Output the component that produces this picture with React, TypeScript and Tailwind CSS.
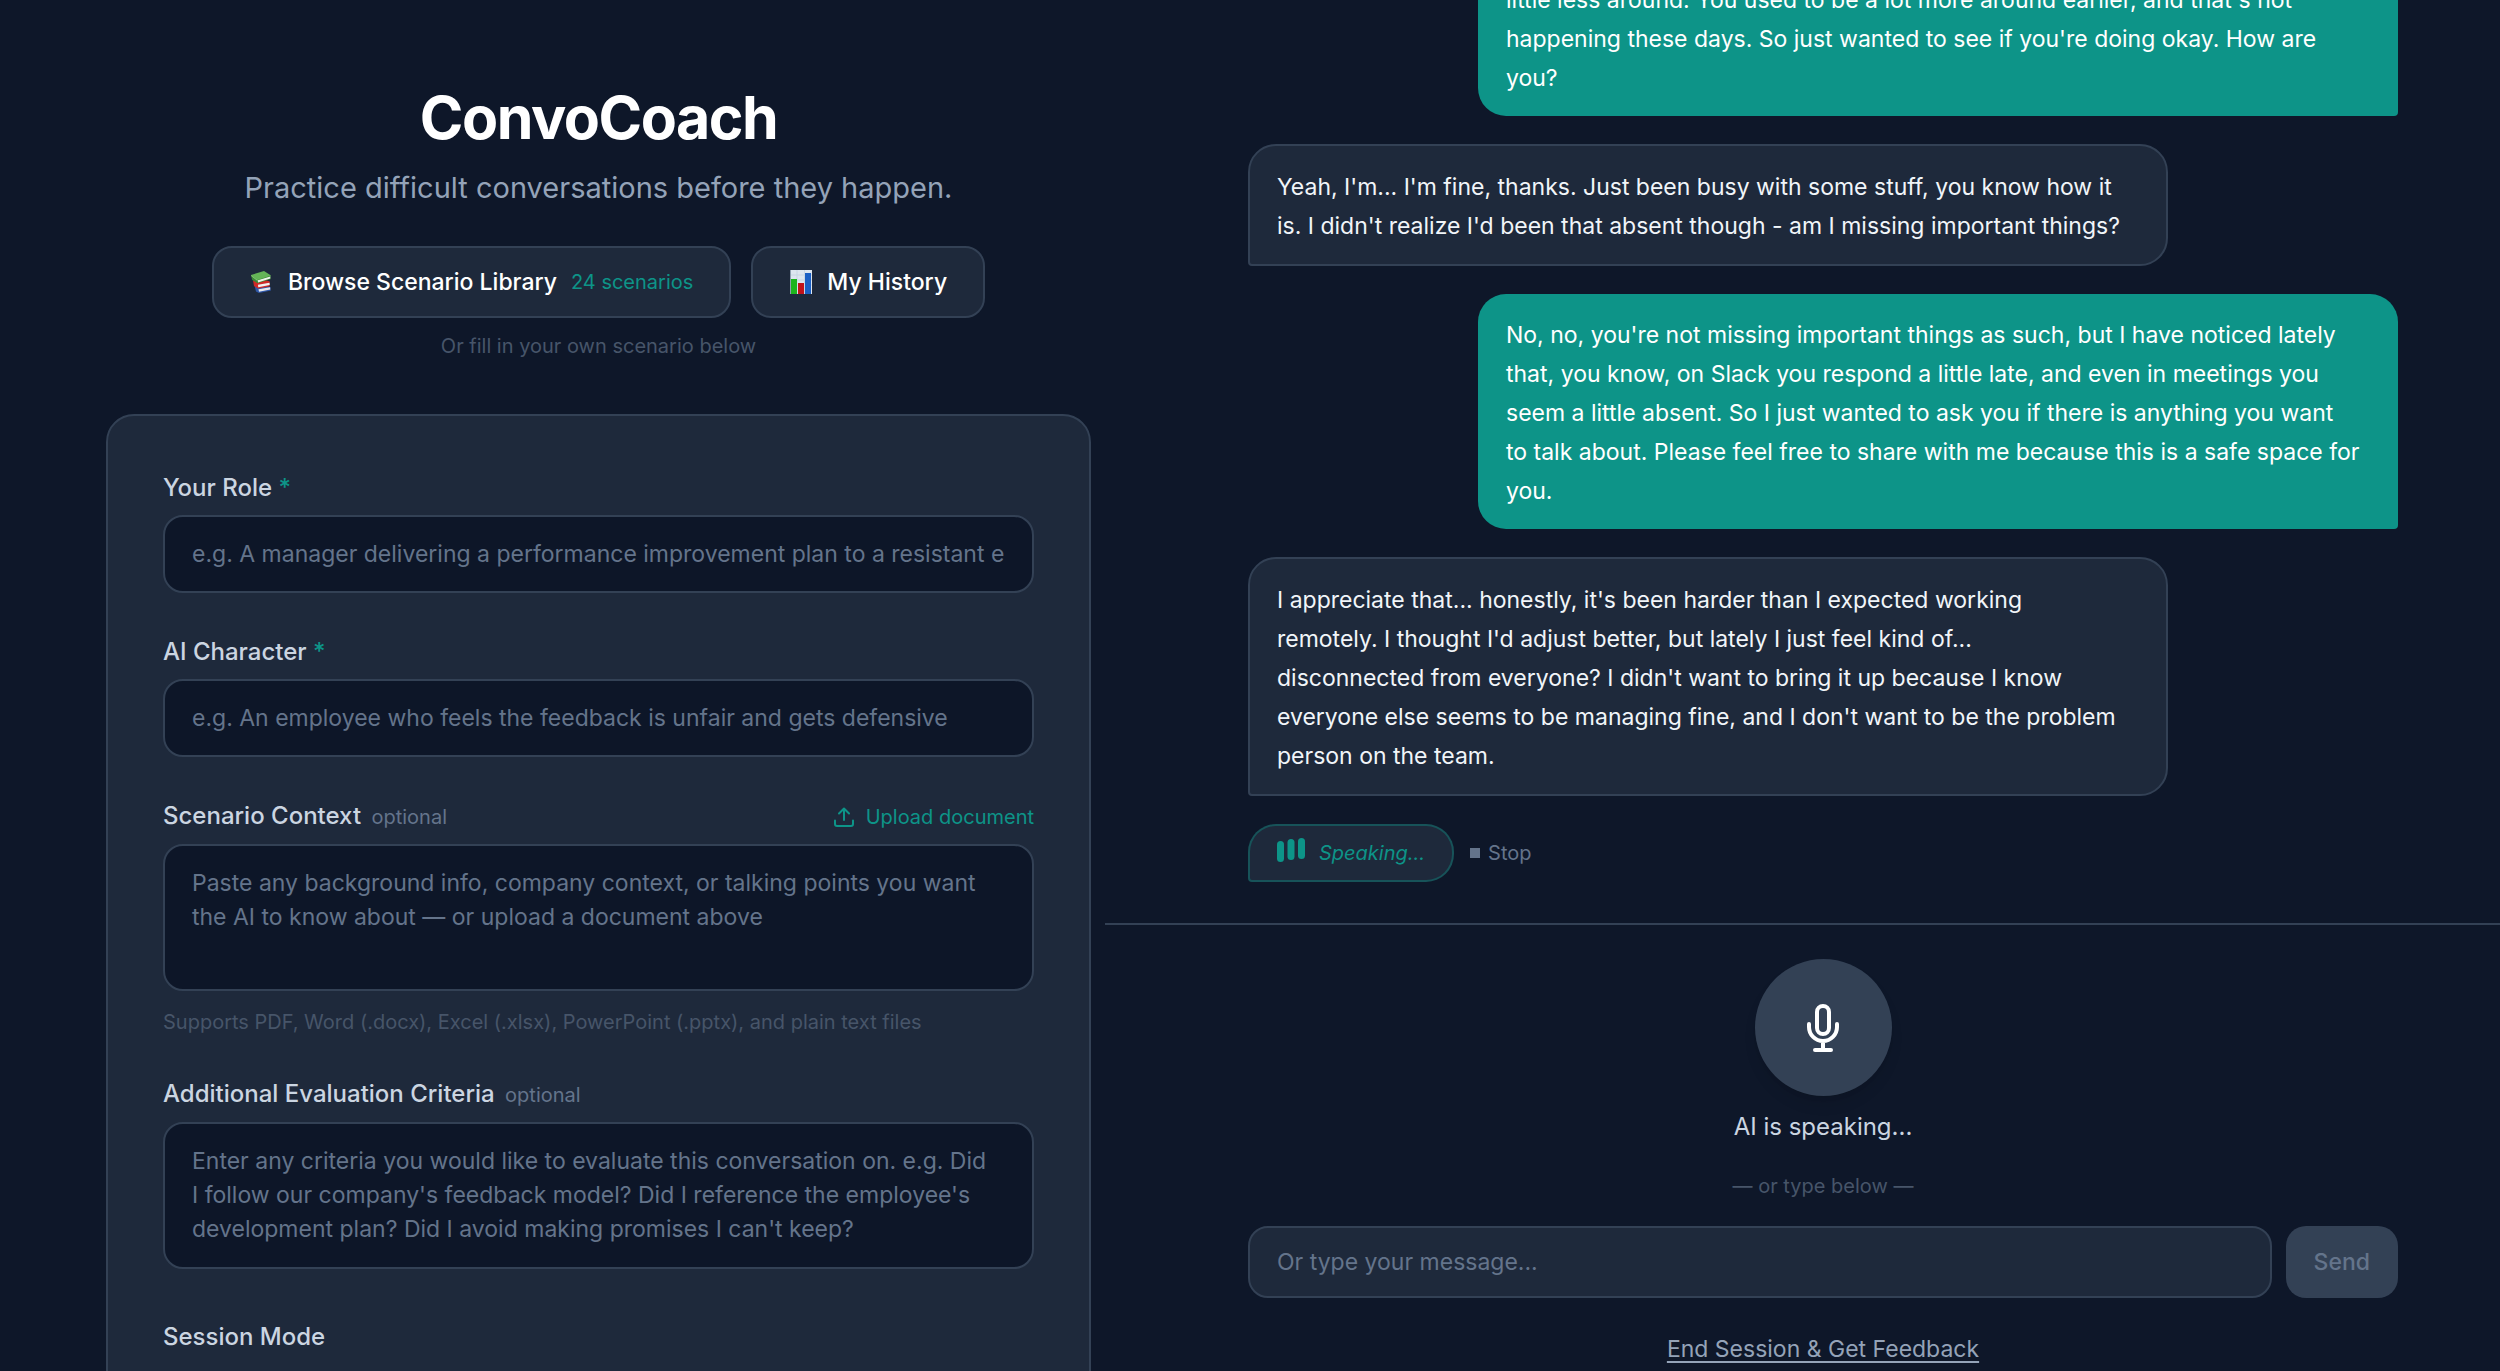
import React from 'react';

interface Message {
  from: 'me' | 'ai';
  text: string;
}

const messages: Message[] = [
  {
    from: 'me',
    text: "little less around. You used to be a lot more around earlier, and that's not\nhappening these days. So just wanted to see if you're doing okay. How are\nyou?",
  },
  {
    from: 'ai',
    text: "Yeah, I'm... I'm fine, thanks. Just been busy with some stuff, you know how it\nis. I didn't realize I'd been that absent though - am I missing important things?",
  },
  {
    from: 'me',
    text: "No, no, you're not missing important things as such, but I have noticed lately\nthat, you know, on Slack you respond a little late, and even in meetings you\nseem a little absent. So I just wanted to ask you if there is anything you want\nto talk about. Please feel free to share with me because this is a safe space for\nyou.",
  },
  {
    from: 'ai',
    text: "I appreciate that... honestly, it's been harder than I expected working\nremotely. I thought I'd adjust better, but lately I just feel kind of...\ndisconnected from everyone? I didn't want to bring it up because I know\neveryone else seems to be managing fine, and I don't want to be the problem\nperson on the team.",
  },
];

const BooksIcon = () => (
  <svg className="w-6 h-6" viewBox="0 0 24 24" aria-hidden="true">
    <path d="M4.500 15.500L6 21.500l3 1.500 12-2.500-.6-1 .2-2.500z" fill="#2f57a8" />
    <path d="M8.500 19.200l11.500-2 .3 2.300L9 21.800z" fill="#e8eaee" />
    <path d="M3 10.500l1 5.500 4 2.500 12-2.300-.5-1 .3-3.700L12 9z" fill="#cf2a27" />
    <path d="M8 14.800l11.500-2 .2 2.200L8.300 17.300z" fill="#f2f2f2" />
    <path d="M1 5l1.200 5L7.500 13.300 21 9l-.8-1.200.6-2.300z" fill="#3c8a35" />
    <path d="M7.800 10.300l12.600-3.900-.2 2L8 12.400z" fill="#eef4ea" />
    <path d="M1 5L14 1l7 4.500L7.500 10z" fill="#65b457" />
    <path d="M1 5l6.500 5v1L1.200 6z" fill="#8fd07f" />
  </svg>
);

const ChartIcon = () => (
  <svg className="w-6 h-6" viewBox="0 0 24 24" aria-hidden="true">
    <rect x="1" y="0" width="22" height="24" fill="#dde6ef" />
    <path d="M1 5h22M1 10h22M1 15h22M8 0v24M15.500 0v24" stroke="#c9d6e3" strokeWidth="1" />
    <path d="M1.500 0v24" stroke="#8fa0b0" strokeWidth="1" />
    <rect x="2" y="9" width="6" height="15" fill="#1db41d" />
    <rect x="9" y="13" width="6" height="11" fill="#c1121a" />
    <rect x="16" y="3" width="6" height="21" fill="#1a5fc4" />
  </svg>
);

const UploadIcon = () => (
  <svg className="w-5 h-5" viewBox="0 0 20 20" fill="none" stroke="currentColor" strokeWidth="2" strokeLinecap="round" strokeLinejoin="round" aria-hidden="true">
    <path d="M1 13.500V17a2 2 0 0 0 2 2h14a2 2 0 0 0 2-2v-3.500M10 13V1.500M5 6.500l5-5 5 5" />
  </svg>
);

const MicIcon = () => (
  <svg className="w-14 h-14" viewBox="0 0 56 56" fill="none" stroke="currentColor" strokeWidth="4" strokeLinecap="round" strokeLinejoin="round" aria-hidden="true">
    <rect x="22" y="6" width="12" height="28" rx="6" />
    <path d="M14 24v3a14 14 0 0 0 28 0v-3M28 41v9M20 50h16" />
  </svg>
);

const labelStyle = 'block text-[24px] leading-8 font-medium text-[#cbd5e1]';
const fieldStyle =
  'block w-full rounded-[20px] border-2 border-[#334155] bg-[#0d1628] px-[27px] text-[23px] text-white placeholder:text-[#64748b] outline-none resize-none';
const navButtonStyle =
  'flex h-[72px] items-center gap-[14px] rounded-[20px] border-2 border-[#334155] bg-[#1e293b] px-9 text-[23px] font-medium text-white';

const SetupPanel: React.FC = () => (
  <section className="w-[1105px] shrink-0 pl-[106px] pr-[14px] pt-[84px]">
    <header className="flex flex-col items-center">
      <h1 className="text-[59px] leading-[68px] font-bold tracking-tight text-white">ConvoCoach</h1>
      <p className="mt-4 text-[29px] leading-10 text-[#94a3b8]">Practice difficult conversations before they happen.</p>
      <div className="mt-[38px] flex gap-5">
        <button className={navButtonStyle}>
          <BooksIcon />
          Browse Scenario Library
          <span className="text-[20px] font-normal text-[#0d9488]">24 scenarios</span>
        </button>
        <button className={navButtonStyle}>
          <ChartIcon />
          My History
        </button>
      </div>
      <p className="mt-3 text-[20px] leading-8 text-[#475569]">Or fill in your own scenario below</p>
    </header>

    <form className="mt-[52px] rounded-t-[28px] border-2 border-[#334155] bg-[#1e293b] px-[55px] pt-14 pb-14">
      <div>
        <label htmlFor="role" className={labelStyle}>
          Your Role <span className="text-[#0d9488]">*</span>
        </label>
        <input id="role" className={`${fieldStyle} mt-[11px] h-[78px]`} placeholder="e.g. A manager delivering a performance improvement plan to a resistant employee" />
      </div>

      <div className="mt-[43px]">
        <label htmlFor="character" className={labelStyle}>
          AI Character <span className="text-[#0d9488]">*</span>
        </label>
        <input id="character" className={`${fieldStyle} mt-[11px] h-[78px]`} placeholder="e.g. An employee who feels the feedback is unfair and gets defensive" />
      </div>

      <div className="mt-[43px]">
        <div className="flex items-center justify-between">
          <label htmlFor="context" className={labelStyle}>
            Scenario Context <span className="ml-1 text-[20px] font-normal text-[#64748b]">optional</span>
          </label>
          <button type="button" className="flex items-center gap-3 text-[20px] leading-8 text-[#0d9488]">
            <UploadIcon />
            Upload document
          </button>
        </div>
        <textarea id="context" rows={3} className={`${fieldStyle} mt-[11px] h-[147px] py-5 leading-[34px]`} placeholder="Paste any background info, company context, or talking points you want the AI to know about — or upload a document above" />
        <p className="mt-[15px] text-[20px] leading-8 text-[#475569]">Supports PDF, Word (.docx), Excel (.xlsx), PowerPoint (.pptx), and plain text files</p>
      </div>

      <div className="mt-10">
        <label htmlFor="criteria" className={labelStyle}>
          Additional Evaluation Criteria <span className="ml-1 text-[20px] font-normal text-[#64748b]">optional</span>
        </label>
        <textarea
          id="criteria"
          rows={3}
          className={`${fieldStyle} mt-[11px] h-[147px] py-5 leading-[34px]`}
          placeholder={"Enter any criteria you would like to evaluate this conversation on. e.g. Did\nI follow our company's feedback model? Did I reference the employee's\ndevelopment plan? Did I avoid making promises I can't keep?"}
        />
      </div>

      <p className={`${labelStyle} mt-[52px]`}>Session Mode</p>
    </form>
  </section>
);

const Bubble: React.FC<{ message: Message }> = ({ message }) =>
  message.from === 'me' ? (
    <p className="w-4/5 self-end whitespace-pre-line rounded-[28px] rounded-br-[4px] bg-[#0d9488] px-7 pt-[22px] pb-[18px] text-white">{message.text}</p>
  ) : (
    <p className="w-4/5 self-start whitespace-pre-line rounded-[28px] rounded-bl-[4px] border-2 border-[#334155] bg-[#1e293b] px-[27px] pt-[22px] pb-[18px] text-[#f1f5f9]">{message.text}</p>
  );

const SessionPanel: React.FC = () => (
  <section className="flex min-w-0 flex-1 flex-col">
    <div className="flex min-h-0 flex-1 flex-col justify-end overflow-hidden pl-[41px]">
      <div className="mx-auto flex w-full max-w-[1150px] flex-col gap-7 pb-[41px] text-[23px] leading-[39px]">
        {messages.map((message) => (
          <Bubble key={message.text} message={message} />
        ))}
        <div className="flex items-center gap-4 leading-8">
          <div className="flex h-[58px] items-center gap-[14px] rounded-[28px] rounded-bl-[4px] border-2 border-[#0d9488]/40 bg-[#1e293b] px-[27px]">
            <svg className="w-7 h-6 -mt-1.5" viewBox="0 0 28 24" fill="#0d9488" aria-hidden="true">
              <rect x="0" y="3" width="7" height="21" rx="3.500" />
              <rect x="10.500" y="1" width="7" height="21" rx="3.500" />
              <rect x="21" y="0" width="7" height="21" rx="3.500" />
            </svg>
            <span className="text-[20px] italic text-[#0d9488]">Speaking...</span>
          </div>
          <button className="flex items-center gap-2 text-[20px] text-[#64748b]">
            <span className="h-[10px] w-[10px] bg-[#64748b]"></span>
            Stop
          </button>
        </div>
      </div>
    </div>

    <div className="border-t-2 border-[#334155] pl-[41px]">
      <div className="mx-auto flex w-full max-w-[1150px] flex-col items-center pt-[34px] pb-1.5">
        <button aria-label="Microphone" className="flex h-[137px] w-[137px] items-center justify-center rounded-full bg-[#334155] text-white shadow-lg">
          <MicIcon />
        </button>
        <p className="mt-[15px] text-[24px] leading-8 text-[#cbd5e1]">AI is speaking...</p>
        <p className="mt-[27px] text-[20px] leading-8 text-[#475569]">— or type below —</p>
        <div className="mt-6 flex w-full gap-[14px]">
          <input aria-label="Message" className="h-[72px] min-w-0 flex-1 rounded-[20px] border-2 border-[#334155] bg-[#1e293b] px-[27px] text-[23px] text-white placeholder:text-[#64748b] outline-none" placeholder="Or type your message..." />
          <button className="h-[72px] rounded-[20px] bg-[#334155] px-7 text-[23px] font-medium text-[#64748b]">Send</button>
        </div>
        <a href="#feedback" className="mt-[35px] text-[23px] leading-8 text-[#94a3b8] underline underline-offset-4">End Session &amp; Get Feedback</a>
      </div>
    </div>
  </section>
);

const App: React.FC = () => (
  <main className="flex h-screen overflow-hidden bg-[#0e1729] font-['Inter',sans-serif]">
    <SetupPanel />
    <SessionPanel />
  </main>
);

export default App;
